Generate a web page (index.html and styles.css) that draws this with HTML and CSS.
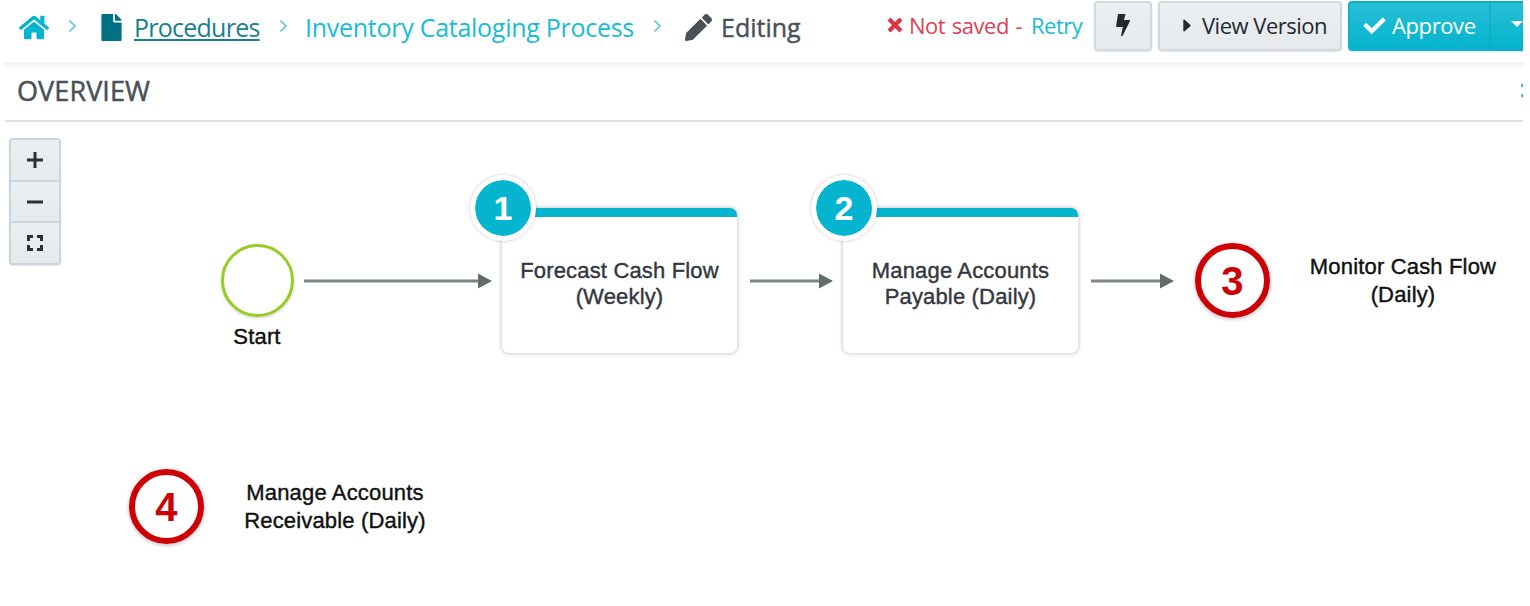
FILE: index.html
```html
<!doctype html>
<html lang="en">
<head>
    <meta charset="utf-8">
    <title>Inventory Cataloging Process</title>
    <link rel="stylesheet" href="styles.css">
</head>
<body>
<div class="app">

    <header class="topbar">
        <nav class="breadcrumb">
            <svg class="icon home" viewBox="0 0 576 512"><path d="M280 149 96 300v164a16 16 0 0 0 16 16h112a16 16 0 0 0 16-16v-96a16 16 0 0 1 16-16h64a16 16 0 0 1 16 16v96a16 16 0 0 0 16 16h112a16 16 0 0 0 16-16V300L296 149a12 12 0 0 0-16 0zM572 251l-84-69V44a12 12 0 0 0-12-12h-56a12 12 0 0 0-12 12v72l-89-74a48 48 0 0 0-61 0L4 251a12 12 0 0 0-1 17l25 31a12 12 0 0 0 17 2L280 107a12 12 0 0 1 16 0l235 194a12 12 0 0 0 17-2l25-31a12 12 0 0 0-1-17z"/></svg>
            <svg class="sep" viewBox="0 0 9 14"><path d="M1.5 1.5 7 7 1.5 12.500"/></svg>
            <svg class="icon file" viewBox="0 0 384 512"><path d="M224 136V0H24C11 0 0 11 0 24v464c0 13 11 24 24 24h336c13 0 24-11 24-24V160H248c-13 0-24-11-24-24zm160-14v6H256V0h6c7 0 13 3 17 7l98 98c4 4 7 10 7 17z"/></svg>
            <a class="crumb procedures" href="#">Procedures</a>
            <svg class="sep" viewBox="0 0 9 14"><path d="M1.5 1.5 7 7 1.5 12.500"/></svg>
            <a class="crumb process" href="#">Inventory Cataloging Process</a>
            <svg class="sep" viewBox="0 0 9 14"><path d="M1.500 1.500 7 7 1.500 12.500"/></svg>
            <svg class="icon pencil" viewBox="0 0 512 512"><path d="M498 142l-46 46c-5 5-13 5-17 0L324 77c-5-5-5-12 0-17l46-46c19-19 49-19 68 0l60 60c19 19 19 49 0 68zm-214-42L22 362 0 484c-3 16 12 30 28 28l122-22 262-262c5-5 5-13 0-17L301 100c-4-5-12-5-17 0z"/></svg>
            <span class="crumb editing">Editing</span>
        </nav>

        <div class="status">
            <svg class="icon times" viewBox="0 0 16 16"><path d="M3.500.5 8 5 12.500.5 15.500 3.500 11 8l4.500 4.500-3 3L8 11l-4.500 4.500-3-3L5 8 .5 3.500z"/></svg>
            <span class="unsaved">Not saved -</span>
            <a class="retry" href="#">Retry</a>
        </div>

        <div class="actions">
            <button class="btn bolt"><svg class="icon" viewBox="0 0 14 22"><path d="M2 0h7.500L8 6h5.500c.6 0 .7.400.5.900L6.500 22H5l1.800-9H.9c-.6 0-.9-.3-.8-.9z"/></svg></button>
            <button class="btn view"><svg class="icon" viewBox="0 0 8 14"><path d="M0 1.500v11c0 1 .8 1.200 1.400.7L7.500 7.800c.5-.5.5-1.100 0-1.600L1.400.8C.8.3 0 .5 0 1.500z"/></svg><span>View Version</span></button>
            <button class="btn approve"><svg class="icon" viewBox="0 0 512 400"><path d="M174 391 7 225c-10-10-10-26 0-36l37-37c10-10 26-10 36 0l112 112L432 24c10-10 26-10 36 0l37 37c10 10 10 26 0 36L210 391c-10 10-26 10-36 0z"/></svg><span>Approve</span></button>
            <button class="btn more"><svg class="icon" viewBox="0 0 12 6"><path d="M0 0h12L6 6z"/></svg></button>
        </div>
    </header>

    <section class="overview">
        <h2>OVERVIEW</h2>
        <svg class="collapse" viewBox="0 0 8 16"><circle cx="4" cy="2.500" r="2"/><circle cx="4" cy="12.800" r="2"/></svg>
    </section>

    <main class="canvas">
        <div class="zoom">
            <button><svg viewBox="0 0 16 16"><path d="M0 8h16M8 0v16"/></svg></button>
            <button><svg viewBox="0 0 16 16"><path d="M0 8h16"/></svg></button>
            <button><svg viewBox="0 0 16 16"><path d="M1.500 6V1.500H6M10 1.500h4.500V6M14.500 10v4.500H10M6 14.500H1.500V10"/></svg></button>
        </div>

        <svg class="arrows" viewBox="0 0 1518 484">
            <g class="line"><path d="M299 159H474M745 159H817M1086 159H1157"/></g>
            <path d="M473 151.500 487 159l-14 7.500zM814 151.500l14 7.500-14 7.500zM1155 151.500l14 7.500-14 7.500z"/>
        </svg>

        <div class="start"></div>
        <div class="label start-label">Start</div>

        <div class="step step1">
            <span class="badge">1</span>
            <p>Forecast Cash Flow<br>(Weekly)</p>
        </div>
        <div class="step step2">
            <span class="badge">2</span>
            <p>Manage Accounts<br>Payable (Daily)</p>
        </div>

        <div class="end end3">3</div>
        <div class="label label3">Monitor Cash Flow<br>(Daily)</div>

        <div class="end end4">4</div>
        <div class="label label4">Manage Accounts<br>Receivable (Daily)</div>
    </main>

</div>
</body>
</html>
```
FILE: styles.css
```css
* {
    box-sizing: border-box;
}

body {
    margin: 0;
    background: #fff;
    font-family: "Open Sans", "Noto Sans", sans-serif;
    color: #495057;
}

a {
    color: #17bcd4;
    text-decoration: none;
}

button {
    font: inherit;
    padding: 0;
    border: 0;
}

.app {
    width: 1518px;
    height: 606px;
    margin-left: 5px;
    overflow: hidden;
}

.icon {
    display: block;
    flex: none;
    fill: currentColor;
}

/* top bar */
.topbar {
    display: flex;
    height: 62px;
    white-space: nowrap;
}

.breadcrumb {
    display: flex;
    align-items: center;
    flex: none;
    width: 882px;
    height: 54px;
    padding-left: 14px;
    font-size: 25px;
}

.home { width: 30px; height: 27px; color: #05b5cf; }
.file { width: 21px; height: 27px; margin-left: 24px; color: #007184; }
.pencil { width: 27px; height: 27px; margin-left: 23px; }

.sep {
    flex: none;
    width: 9px;
    height: 14px;
    margin-top: -3px;
    margin-left: 19px;
    fill: none;
    stroke: #7fcbd8;
    stroke-width: 2;
}

.crumb { flex: none; }

.procedures {
    width: 126px;
    margin-left: 12px;
    letter-spacing: -0.75px;
    color: #18808f;
    text-decoration: underline;
    text-decoration-thickness: 2px;
    text-underline-offset: 2px;
}

.process {
    width: 329px;
    margin-left: 17px;
    letter-spacing: -0.27px;
}

.editing {
    margin-left: 9px;
    letter-spacing: 0;
    -webkit-text-stroke: 0.4px;
}

.status {
    display: flex;
    align-items: center;
    flex: none;
    width: 207px;
    height: 50px;
    font-size: 22px;
    letter-spacing: -0.5px;
}

.times { width: 16px; height: 16px; color: #dc3545; }
.unsaved { width: 117px; margin-left: 6px; color: #dc4355; word-spacing: 1.5px; }
.retry { margin-left: 5px; }

.actions {
    display: flex;
    flex: none;
    padding-top: 1px;
}

.btn {
    display: flex;
    align-items: center;
    flex: none;
    height: 50px;
    margin-right: 6px;
    padding-bottom: 2px;
    border: 2px solid #d1d8de;
    border-radius: 4px;
    background: linear-gradient(#eceff1, #e7eaed);
    box-shadow: 0 1px 2px rgba(0, 0, 0, .12);
    color: #23282d;
    font-size: 22px;
}

.bolt { width: 58px; justify-content: center; }
.bolt .icon { width: 14px; height: 22px; }

.view { width: 184px; padding-left: 23px; letter-spacing: -0.5px; }
.view .icon { width: 8px; height: 13px; margin-right: 11px; }

.approve {
    width: 142px;
    margin-right: 0;
    padding-left: 13px;
    border-color: #10b3ca;
    border-right: 0;
    border-radius: 4px 0 0 4px;
    background: linear-gradient(#27bfd6, #05b3ce);
    color: #fff;
    letter-spacing: -0.4px;
}
.approve .icon { width: 23px; height: 17px; margin-right: 6px; }

.more {
    width: 58px;
    margin-right: 0;
    padding-left: 20px;
    border-color: #0baec6;
    border-left-width: 1px;
    border-radius: 0 4px 4px 0;
    background: linear-gradient(#27bfd6, #05b3ce);
    color: #fff;
}
.more .icon { width: 12px; height: 6px; margin-top: -2px; }

/* overview heading */
.overview {
    display: flex;
    align-items: center;
    justify-content: space-between;
    height: 60px;
    padding-left: 12px;
    border-bottom: 2px solid #dfe0e1;
    background: linear-gradient(#efefef, #fff 8px);
}

.overview h2 {
    margin: -2px 0 0;
    font-size: 27px;
    font-weight: 400;
    letter-spacing: 0.1px;
    -webkit-text-stroke: 0.5px;
}

.collapse {
    width: 8px;
    height: 16px;
    margin-right: -4px;
    fill: #2fb0c2;
}

/* process map, nodes sit freely on the canvas */
.canvas {
    position: relative;
    height: 484px;
    font-family: "Liberation Sans", Arial, sans-serif;
    font-size: 22px;
    letter-spacing: 0.17px;
    text-align: center;
    white-space: nowrap;
}

.zoom {
    position: absolute;
    left: 4px;
    top: 16px;
    width: 52px;
    height: 127px;
    display: flex;
    flex-direction: column;
    border: 2px solid #cdd5dc;
    border-radius: 4px;
    background: #cdd5dc;
    box-shadow: 0 1px 2px rgba(0, 0, 0, .1);
    gap: 2px;
}

.zoom button {
    display: flex;
    flex: 1;
    align-items: center;
    justify-content: center;
    background: linear-gradient(#eceff2, #e6eaed);
}

.zoom svg {
    width: 16px;
    height: 16px;
    fill: none;
    stroke: #2c3035;
    stroke-width: 3;
}

.arrows {
    position: absolute;
    left: 0;
    top: 0;
    width: 1518px;
    height: 484px;
    fill: #626c6c;
}

.arrows .line {
    stroke: #7b8787;
    stroke-width: 3;
}

.start {
    position: absolute;
    left: 216px;
    top: 122px;
    width: 73px;
    height: 73px;
    border: 3px solid #97cc22;
    border-radius: 50%;
    box-shadow: 0 1px 3px rgba(0, 0, 0, .2);
}

.label {
    position: absolute;
    line-height: 28px;
    color: #111;
    -webkit-text-stroke: 0.4px;
}

.start-label { left: 202px; top: 201px; width: 100px; }
.label3 { left: 1278px; top: 131px; width: 240px; }
.label4 { left: 210px; top: 357px; width: 240px; }

.step {
    position: absolute;
    top: 86px;
    width: 235px;
    height: 145px;
    border-top: 9px solid #05b5cf;
    border-radius: 7px;
    background: #fff;
    box-shadow: 0 0 3px 2px rgba(0, 0, 0, .13);
}

.step1 { left: 497px; }
.step2 { left: 838px; }

.step p {
    margin: 41px 0 0;
    line-height: 26px;
    color: #33373d;
    -webkit-text-stroke: 0.4px;
}

.badge {
    position: absolute;
    left: -32px;
    top: -42px;
    width: 66px;
    height: 66px;
    border: 5px solid #fff;
    border-radius: 50%;
    background: #05b5cf;
    background-clip: padding-box;
    box-shadow: 0 0 3px rgba(0, 0, 0, .25);
    font-size: 34px;
    font-weight: bold;
    line-height: 56px;
    color: #fff;
}

.end {
    position: absolute;
    width: 75px;
    height: 75px;
    border: 6px solid #cd0005;
    border-radius: 50%;
    box-shadow: 0 1px 4px rgba(0, 0, 0, .3);
    font-size: 40px;
    font-weight: bold;
    line-height: 65px;
    color: #cd0005;
}

.end3 { left: 1190px; top: 121px; }
.end4 { left: 124px; top: 347px; }
```
